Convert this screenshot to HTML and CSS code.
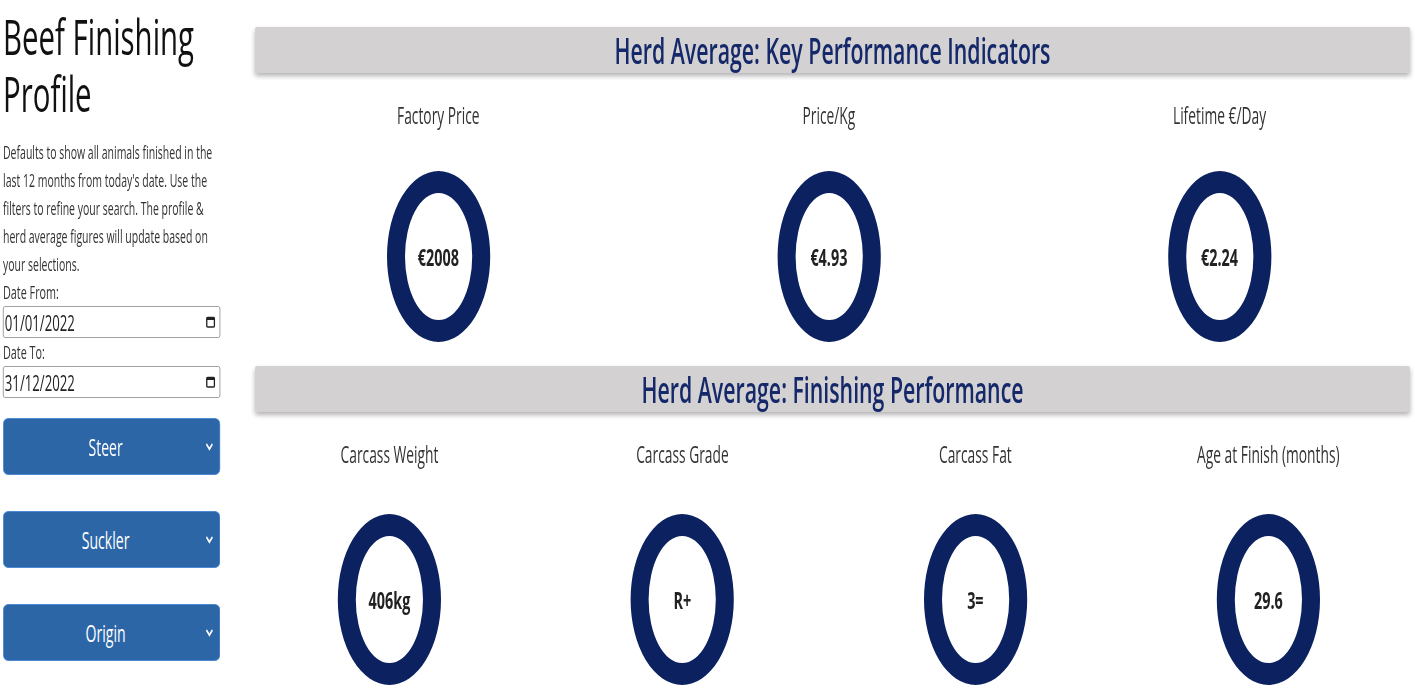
FILE: index.html
```html
<!DOCTYPE html>
<html lang="en">
<head>
    <meta charset="UTF-8">
    <meta name="viewport" content="width=device-width, initial-scale=1.0">
    <title>Beef Finishing Profile</title>
    <link rel="stylesheet" href="styles.css">
</head>
<body>
    <div class="frame">
    <div class="page">
        <aside class="sidebar">
            <h1>Beef Finishing Profile</h1>
            <p class="intro">Defaults to show all animals finished in the last 12 months from today's date. Use the filters to refine your search. The profile &amp; herd average figures will update based on your selections.</p>
            <label class="field-label">Date From:</label>
            <div class="date-input">
                <span>01/01/2022</span>
                <svg class="cal" viewBox="0 0 10 12" width="10" height="12"><rect x="1" y="1.5" width="8" height="9.5" rx="1" fill="none" stroke="#222" stroke-width="1.4"/><rect x="1" y="1.5" width="8" height="2.5" fill="#222"/></svg>
            </div>
            <label class="field-label">Date To:</label>
            <div class="date-input">
                <span>31/12/2022</span>
                <svg class="cal" viewBox="0 0 10 12" width="10" height="12"><rect x="1" y="1.5" width="8" height="9.5" rx="1" fill="none" stroke="#222" stroke-width="1.4"/><rect x="1" y="1.5" width="8" height="2.5" fill="#222"/></svg>
            </div>
            <div class="filters">
                <div class="filter-btn"><span></span><span class="filter-text">Steer</span><svg class="chev" viewBox="0 0 14 9" width="14" height="9"><polyline points="2,2 7,7 12,2" fill="none" stroke="#fff" stroke-width="2.4"/></svg></div>
                <div class="filter-btn"><span></span><span class="filter-text">Suckler</span><svg class="chev" viewBox="0 0 14 9" width="14" height="9"><polyline points="2,2 7,7 12,2" fill="none" stroke="#fff" stroke-width="2.4"/></svg></div>
                <div class="filter-btn"><span></span><span class="filter-text">Origin</span><svg class="chev" viewBox="0 0 14 9" width="14" height="9"><polyline points="2,2 7,7 12,2" fill="none" stroke="#fff" stroke-width="2.4"/></svg></div>
            </div>
        </aside>
        <main class="main">
            <section class="kpi-section">
                <h2 class="banner">Herd Average: Key Performance Indicators</h2>
                <div class="kpi-grid three">
                    <div class="kpi">
                        <div class="kpi-label">Factory Price</div>
                        <div class="ring">€2008</div>
                    </div>
                    <div class="kpi">
                        <div class="kpi-label">Price/Kg</div>
                        <div class="ring">€4.93</div>
                    </div>
                    <div class="kpi">
                        <div class="kpi-label">Lifetime €/Day</div>
                        <div class="ring">€2.24</div>
                    </div>
                </div>
            </section>
            <section class="kpi-section second">
                <h2 class="banner">Herd Average: Finishing Performance</h2>
                <div class="kpi-grid four">
                    <div class="kpi">
                        <div class="kpi-label">Carcass Weight</div>
                        <div class="ring">406kg</div>
                    </div>
                    <div class="kpi">
                        <div class="kpi-label">Carcass Grade</div>
                        <div class="ring">R+</div>
                    </div>
                    <div class="kpi">
                        <div class="kpi-label">Carcass Fat</div>
                        <div class="ring">3=</div>
                    </div>
                    <div class="kpi">
                        <div class="kpi-label">Age at Finish (months)</div>
                        <div class="ring">29.6</div>
                    </div>
                </div>
            </section>
        </main>
    </div>
    </div>
</body>
</html>
```

FILE: styles.css
```css
html, body {
    margin: 0;
    padding: 0;
    background-color: #ffffff;
    overflow: hidden;
}
body {
    font-family: "Open Sans", "Noto Sans", sans-serif;
    color: #222;
}
.frame {
    width: 1415px;
    height: 694px;
    overflow: hidden;
}
/* the capture is squeezed sideways, so the page is laid out wide and scaled */
.page {
    width: 2358px;
    display: flex;
    transform: scaleX(0.6);
    transform-origin: 0 0;
}
.sidebar {
    width: 362px;
    margin-left: 5px;
    flex-shrink: 0;
}
h1 {
    font-size: 49px;
    font-weight: 400;
    line-height: 57px;
    margin: 8px 0 0 0;
    color: #111;
}
.intro {
    font-size: 17.5px;
    line-height: 28px;
    margin: 16px 0 0 0;
    color: #333;
}
.field-label {
    display: block;
    font-size: 18px;
    line-height: 28px;
    color: #333;
}
.date-input {
    height: 30px;
    border: 1px solid #8a8a8a;
    border-radius: 3px;
    display: flex;
    align-items: center;
    justify-content: space-between;
    padding: 0 10px 0 2px;
    font-size: 22px;
    color: #222;
}
.cal {
    transform: scaleX(1.6);
}
.filters {
    margin-top: 20px;
    display: flex;
    flex-direction: column;
    gap: 36px;
}
.filter-btn {
    height: 55px;
    background-color: #2c66a6;
    border: 1px solid #4c8ad6;
    border-radius: 9px / 6px;
    display: grid;
    grid-template-columns: 1fr auto 1fr;
    align-items: center;
    color: #fff;
}
.filter-text {
    font-size: 23.5px;
    margin-right: 20px;
}
.chev {
    justify-self: end;
    margin-right: 10px;
}
.main {
    flex: 1;
    margin-left: 38px;
}
.kpi-section {
    padding-top: 27px;
}
.kpi-section.second {
    padding-top: 24px;
}
.banner {
    margin: 0 8px 0 20px;
    height: 46px;
    line-height: 46px;
    background-color: #d3d1d2;
    box-shadow: 0 3px 7px rgba(0, 0, 0, 0.3);
    border-radius: 3px;
    text-align: center;
    font-size: 35.5px;
    font-weight: 600;
    color: #15296a;
}
.kpi-grid {
    display: grid;
    margin-top: 28px;
}
.kpi-grid.three {
    grid-template-columns: repeat(3, 1fr);
}
.kpi-grid.four {
    grid-template-columns: repeat(4, 1fr);
    margin-top: 28px;
}
.kpi {
    display: flex;
    flex-direction: column;
    align-items: center;
}
.kpi-label {
    font-size: 23px;
    line-height: 28px;
    color: #333;
}
.ring {
    margin-top: 42px;
    width: 112px;
    height: 127px;
    border: solid #0b2160;
    border-width: 22px 30px;
    border-radius: 50%;
    display: flex;
    align-items: center;
    justify-content: center;
    font-size: 24px;
    font-weight: 700;
    color: #222;
}
.second .ring {
    margin-top: 46px;
}
```
